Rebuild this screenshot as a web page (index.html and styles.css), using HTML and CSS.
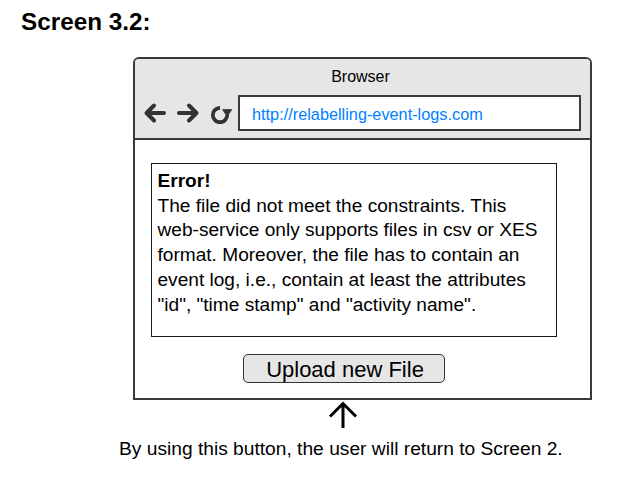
FILE: index.html
```html
<!DOCTYPE html>
<html>
<head>
<meta charset="utf-8">
<link rel="stylesheet" href="styles.css">
</head>
<body>
<h1 class="title">Screen 3.2:</h1>
<div class="browser">
  <div class="chrome">
    <div class="chrome-label">Browser</div>
    <div class="nav-row">
      <div class="nav-icons">
        <svg class="ico" width="24" height="22" viewBox="0 0 24 22"><path d="M21 11 H4 M11 3.5 L3.5 11 L11 18.5" fill="none" stroke="#333" stroke-width="4" stroke-linecap="round" stroke-linejoin="round"/></svg>
        <svg class="ico" width="24" height="22" viewBox="0 0 24 22"><path d="M3 11 H20 M13 3.5 L20.5 11 L13 18.5" fill="none" stroke="#333" stroke-width="4" stroke-linecap="round" stroke-linejoin="round"/></svg>
        <svg class="ico" width="24" height="22" viewBox="0 0 24 22"><path d="M18.2 13 A7.2 7.2 0 1 1 11 5.8" fill="none" stroke="#333" stroke-width="3.8"/><path d="M13.6 7.6 L22.8 7.6 L18.2 14.6 Z" fill="#333" stroke="#333" stroke-width="0.8" stroke-linejoin="round"/></svg>
      </div>
      <div class="address">http://relabelling-event-logs.com</div>
    </div>
  </div>
  <div class="page">
    <div class="error-box">
      <b>Error!</b><br>
      The file did not meet the constraints. This<br>
      web-service only supports files in csv or XES<br>
      format. Moreover, the file has to contain an<br>
      event log, i.e., contain at least the attributes<br>
      "id", "time stamp" and "activity name".
    </div>
    <div class="upload-btn">Upload new File</div>
  </div>
</div>
<svg class="up-arrow" width="30" height="28" viewBox="0 0 30 28"><path d="M15 27 V3 M2 15.5 L15 2.5 L28 15.5" fill="none" stroke="#000" stroke-width="3"/></svg>
<p class="caption">By using this button, the user will return to Screen 2.</p>
</body>
</html>
```

FILE: styles.css
```css
html, body {
  margin: 0;
  padding: 0;
  background: #fff;
}
body {
  font-family: "Liberation Sans", Arial, sans-serif;
  color: #000;
  width: 639px;
  height: 487px;
  overflow: hidden;
}
.title {
  margin: 0;
  padding: 8px 0 0 21px;
  font-size: 24.3px;
  line-height: 28px;
  font-weight: bold;
}
.browser {
  margin: 21px 0 0 133px;
  width: 459px;
  height: 343px;
  box-sizing: border-box;
  border: 2px solid #3a3a3a;
  border-radius: 6px 6px 0 0;
  display: flex;
  flex-direction: column;
  overflow: hidden;
}
.chrome {
  height: 81px;
  box-sizing: border-box;
  background: #e6e6e6;
  border-bottom: 2px solid #3a3a3a;
  padding-top: 8px;
}
.chrome-label {
  text-align: center;
  font-size: 16px;
  line-height: 20px;
  height: 20px;
  padding-right: 4px;
}
.nav-row {
  margin-top: 8px;
  display: flex;
  align-items: center;
  padding-left: 8px;
  padding-right: 9px;
}
.nav-icons {
  display: flex;
  gap: 9px;
  align-items: center;
  width: 95px;
}
.ico {
  display: block;
  flex: none;
}
.address {
  flex: 1;
  height: 36px;
  box-sizing: border-box;
  border: 2px solid #3a3a3a;
  background: #fff;
  color: #007fff;
  font-size: 16.3px;
  line-height: 20px;
  padding: 7px 0 0 12px;
}
.page {
  flex: 1;
  background: #fff;
  padding: 23px 0 0 16px;
}
.error-box {
  width: 406px;
  height: 174px;
  box-sizing: border-box;
  border: 1.5px solid #1a1a1a;
  padding: 5px 5px 0 5.5px;
  font-size: 19.1px;
  line-height: 24.7px;
}
.upload-btn {
  margin: 17px 0 0 92px;
  width: 202px;
  height: 29px;
  box-sizing: border-box;
  border: 1.5px solid #333;
  border-radius: 5px;
  background: #e6e6e6;
  text-align: center;
  font-size: 22px;
  line-height: 24px;
  padding-top: 2.5px;
  padding-left: 2px;
  overflow: hidden;
}
.up-arrow {
  display: block;
  margin: 1px 0 0 328px;
}
.caption {
  margin: 9px 0 0 119px;
  font-size: 19.2px;
  line-height: 22px;
}
```
